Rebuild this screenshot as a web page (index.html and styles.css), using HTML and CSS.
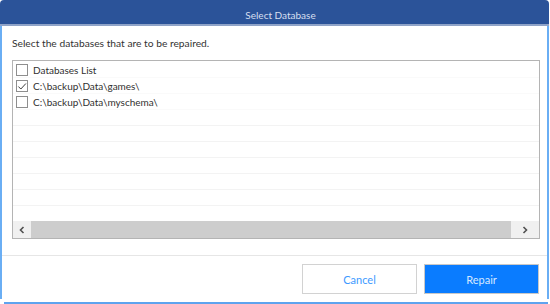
FILE: index.html
```html
<!DOCTYPE html>
<html lang="en">
<head>
    <meta charset="UTF-8">
    <title>Select Database</title>
    <link rel="stylesheet" href="styles.css">
</head>
<body>
    <div class="dialog">
        <div class="title-bar">Select Database</div>
        <div class="title-edge"></div>
        <div class="window">
            <div class="intro">Select the databases that are to be repaired.</div>

            <div class="db-list">
                <div class="rows">
                    <div class="row">
                        <span class="check"></span>
                        <span class="label">Databases List</span>
                    </div>
                    <div class="row">
                        <span class="check checked">
                            <svg width="11" height="11" viewBox="0 0 11 11"><path d="M1.5 5.5 L4.2 8.3 L9.8 2.2" fill="none" stroke="#3c3c3c" stroke-width="1.1"/></svg>
                        </span>
                        <span class="label">C:\backup\Data\games\</span>
                    </div>
                    <div class="row">
                        <span class="check"></span>
                        <span class="label">C:\backup\Data\myschema\</span>
                    </div>
                    <div class="row"></div>
                    <div class="row"></div>
                    <div class="row"></div>
                    <div class="row"></div>
                    <div class="row"></div>
                    <div class="row"></div>
                    <div class="row"></div>
                </div>
                <div class="hscroll">
                    <span class="arrow">
                        <svg width="8" height="8" viewBox="0 0 8 8"><path d="M5.5 1 L2.5 4 L5.5 7" fill="none" stroke="#505050" stroke-width="1.6"/></svg>
                    </span>
                    <span class="thumb"></span>
                    <span class="arrow right">
                        <svg width="8" height="8" viewBox="0 0 8 8"><path d="M2.5 1 L5.5 4 L2.5 7" fill="none" stroke="#505050" stroke-width="1.6"/></svg>
                    </span>
                </div>
            </div>

            <div class="footer">
                <button class="btn cancel">Cancel</button>
                <button class="btn repair">Repair</button>
            </div>
        </div>
        <div class="bottom-edge"></div>
    </div>
</body>
</html>
```

FILE: styles.css
```css
body {
    margin: 0;
    font-family: Lato, "Open Sans", sans-serif;
    background: #ffffff;
}

.dialog {
    width: 549px;
    height: 304px;
}

.title-bar {
    height: 24px;
    box-sizing: border-box;
    padding: 7px 0 0 12px;
    line-height: 16px;
    font-size: 10px;
    text-align: center;
    color: #d6dff0;
    background: #2b5399;
    border-radius: 4px 4px 0 0;
}

.title-edge {
    height: 2px;
    background: #8fa3c8;
}

.window {
    height: 273px;
    border-left: 2px solid #6aaef4;
    border-right: 2px solid #6aaef4;
    background: #ffffff;
    display: flex;
    flex-direction: column;
}

.intro {
    height: 34px;
    box-sizing: border-box;
    padding: 9px 0 0 10px;
    line-height: 16px;
    font-size: 10.25px;
    color: #333333;
}

/* list box */
.db-list {
    margin: 0 7px 0 10px;
    height: 179px;
    box-sizing: border-box;
    border: 1px solid #b4b4b4;
    display: flex;
    flex-direction: column;
}

.rows {
    flex: 1;
    overflow: hidden;
    padding-top: 1px;
}

.row {
    height: 16px;
    box-sizing: border-box;
    border-bottom: 1px solid #f3f3f3;
    display: flex;
    align-items: flex-start;
    padding-left: 3px;
}

.row:nth-child(-n+3) {
    border-bottom-color: #fafafa;
}

.check {
    width: 12px;
    height: 12px;
    margin-top: 2px;
    box-sizing: border-box;
    border: 1px solid #8e8e8e;
    background: #ffffff;
    display: flex;
    align-items: center;
    justify-content: center;
}

.label {
    margin-left: 5px;
    font-size: 10px;
    line-height: 16px;
    color: #303030;
}

.hscroll {
    height: 17px;
    display: flex;
    background: #f0f0f0;
}

.arrow {
    width: 18px;
    display: flex;
    align-items: center;
    justify-content: center;
}

.arrow.right {
    width: 28px;
}

.thumb {
    flex: 1;
    background: #cdcdcd;
}

/* footer */
.footer {
    margin-top: 16px;
    border-top: 1px solid #e6e6e6;
    padding: 8px 8px 0 0;
    display: flex;
    justify-content: flex-end;
    gap: 7px;
}

.btn {
    width: 115px;
    height: 30px;
    font-family: Lato, "Open Sans", sans-serif;
    font-size: 11px;
    cursor: pointer;
}

.cancel {
    background: #ffffff;
    border: 1px solid #d2d2d2;
    color: #3d9aff;
}

.repair {
    background: #0a7cff;
    border: 1px solid #c8c8c8;
    color: #d6e8ff;
}

.bottom-edge {
    height: 2px;
    margin: 3px 1px 0 4px;
    background: #5ea3ee;
}
```
